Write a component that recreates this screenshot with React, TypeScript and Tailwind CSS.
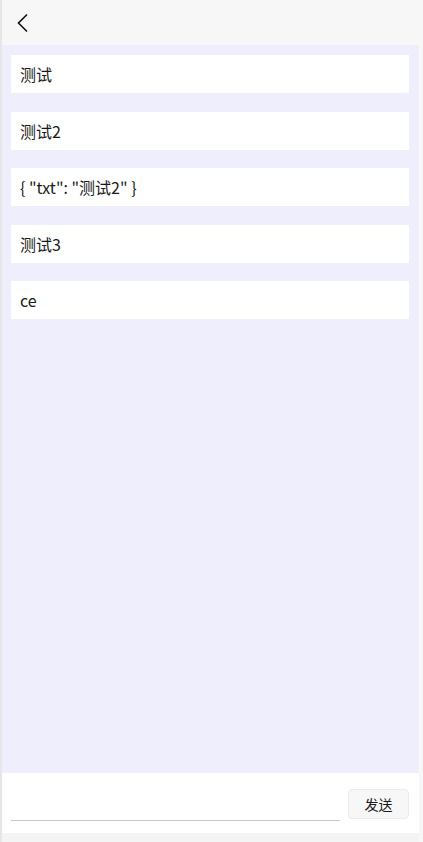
import React from "react";

const items = ["测试", "测试2", '{ "txt": "测试2" }', "测试3", "ce"];

export default function App() {
  return (
    <div
      className="flex h-[842px] w-[423px] bg-[#f4f4f4]"
      style={{ fontFamily: '"Noto Sans CJK SC", "Noto Sans", sans-serif' }}
    >
      <div className="w-[2px] bg-[#e6e6e6]" />
      <div className="flex w-[417px] flex-col pb-[9px]">
        <div className="flex h-[45px] items-center bg-[#f7f7f7] pl-[14px]">
          <svg width="14" height="20" viewBox="0 0 14 20" fill="none">
            <path d="M11 1.5 L2.5 10 L11 18.5" stroke="#111" strokeWidth="1.6" />
          </svg>
        </div>
        <div className="flex flex-1 flex-col gap-[18.5px] bg-[#efeefd] pl-[9px] pr-[10px] pt-[10px]">
          {items.map((t, i) => (
            <div key={i} className="flex h-[38px] items-center bg-white px-[9px] text-[16px] text-[#1a1a1a]">
              {t}
            </div>
          ))}
        </div>
        <div className="flex h-[60px] items-end bg-white pb-[12px] pl-[9px] pr-[10px]">
          <div className="h-[1px] w-[329px] bg-[#c8c8c8]" />
          <div className="flex-1" />
          <button className="mb-[2px] flex h-[30px] w-[61px] items-center justify-center rounded-[4px] border border-[#ececec] bg-[#f7f7f7] text-[14px] text-[#1a1a1a]">
            发送
          </button>
        </div>
      </div>
      <div className="flex-1 bg-[#f7f7f7]" />
    </div>
  );
}
